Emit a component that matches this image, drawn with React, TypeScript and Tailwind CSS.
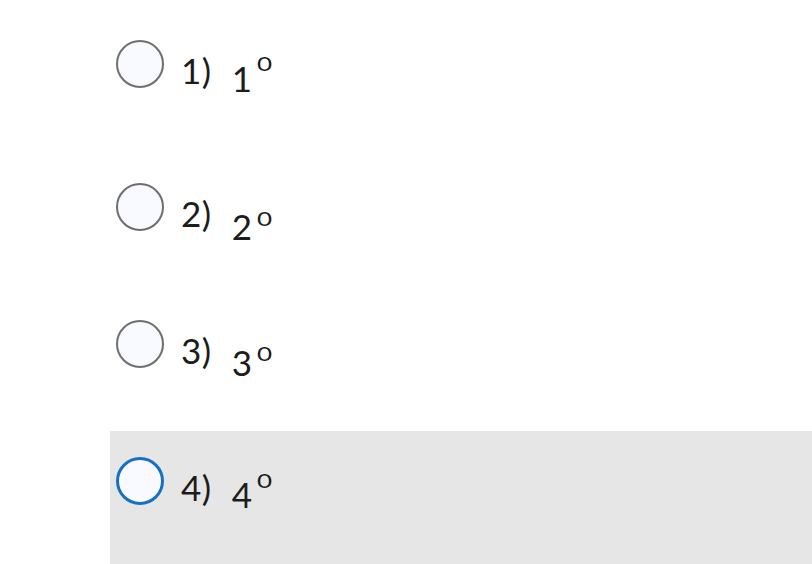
const options = [
  { id: 1, base: "1", selected: false, shift: "top-[8px]", raise: "top-[-21px]", h: "h-[143px]" },
  { id: 2, base: "2", selected: false, shift: "top-[13px]", raise: "top-[-14px]", h: "h-[137px]" },
  { id: 3, base: "3", selected: false, shift: "top-[12px]", raise: "top-[-15px]", h: "h-[137px]" },
  { id: 4, base: "4", selected: true, shift: "top-[7px]", raise: "top-[-20px]", h: "h-[137px]" },
];

const Radio = ({ selected }: { selected: boolean }) => (
  <span
    className={
      selected
        ? "mt-[26px] box-border block h-[48px] w-[48px] shrink-0 rounded-full border-[3px] border-[#1672c0] bg-[#f9faff]"
        : "mt-[26px] box-border block h-[48px] w-[48px] shrink-0 rounded-full border-2 border-[#6e6e6e] bg-[#f9faff]"
    }
  />
);

export default function App() {
  return (
    <div className="min-h-[564px] w-[812px] overflow-hidden bg-white pt-[14px] pl-[110px] font-['Lato','Open_Sans',sans-serif] text-[#1c1c1c]">
      <ul>
        {options.map((opt) => (
          <li
            key={opt.id}
            className={
              opt.h +
              (opt.selected ? " bg-[#e6e6e6]" : "") +
              " flex items-start pl-[6px]"
            }
          >
            <Radio selected={opt.selected} />
            <div className="ml-[17px] mt-[34px] whitespace-nowrap text-[35px] leading-[44px] tracking-[0.5px]">
              <span>{opt.id})</span>
              <span className={"relative ml-[20px] " + opt.shift}>
                {opt.base}
                <span
                  className={
                    "relative ml-[5px] inline-block origin-left scale-x-[1.3] text-[20px] leading-none " +
                    opt.raise
                  }
                >
                  0
                </span>
              </span>
            </div>
          </li>
        ))}
      </ul>
    </div>
  );
}
